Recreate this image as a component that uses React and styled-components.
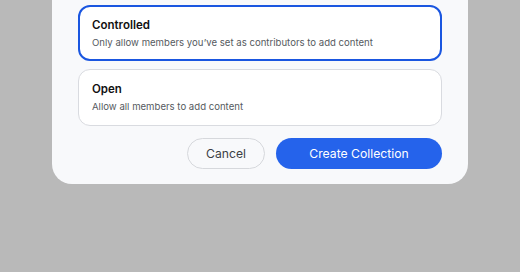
import React from "react";
import styled, { createGlobalStyle } from "styled-components";

const GlobalStyle = createGlobalStyle`
  body {
    margin: 0;
    background: #b9b9b9;
    font-family: Inter, "Noto Sans", sans-serif;
  }
`;

const Page = styled.div`
  width: 520px;
  height: 272px;
  padding: 0 52px;
  box-sizing: border-box;
`;

const Modal = styled.div`
  background: #f8f9fb;
  border-radius: 0 0 20px 20px;
  padding: 5px 26px 15px;
  display: flex;
  flex-direction: column;
`;

const Options = styled.div`
  display: flex;
  flex-direction: column;
  gap: 8px;
`;

const Option = styled.div`
  background: #fff;
  border: ${({ selected }) => (selected ? "2px solid #1a56e0" : "1px solid #d9dbe0")};
  border-radius: 12px;
  padding: ${({ selected }) => (selected ? "11px 12px 10px" : "12px 13px")};
  display: flex;
  flex-direction: column;
  gap: 3px;
`;

const Title = styled.div`
  font-size: 11.5px;
  font-weight: 600;
  color: #111;
  line-height: 15px;
`;

const Desc = styled.div`
  font-size: 9.6px;
  color: #555a60;
  line-height: 13px;
`;

const Actions = styled.div`
  display: flex;
  justify-content: flex-end;
  gap: 11px;
  margin-top: 12px;
`;

const Button = styled.button`
  height: 31px;
  border-radius: 16px;
  font-family: inherit;
  font-size: 12.2px;
  padding: 0;
  width: ${({ w }) => w}px;
  cursor: pointer;
  ${({ primary }) =>
    primary
      ? `
  background: #2563eb;
  border: none;
  color: #fff;`
      : `
  background: #f8f9fb;
  border: 1px solid #d6d8dc;
  color: #3c3f44;`}
`;

export default function App() {
  return (
    <Page>
      <GlobalStyle />
      <Modal>
        <Options>
          <Option selected>
            <Title>Controlled</Title>
            <Desc>Only allow members you’ve set as contributors to add content</Desc>
          </Option>
          <Option>
            <Title>Open</Title>
            <Desc>Allow all members to add content</Desc>
          </Option>
        </Options>
        <Actions>
          <Button w={78}>Cancel</Button>
          <Button primary w={166}>Create Collection</Button>
        </Actions>
      </Modal>
    </Page>
  );
}
